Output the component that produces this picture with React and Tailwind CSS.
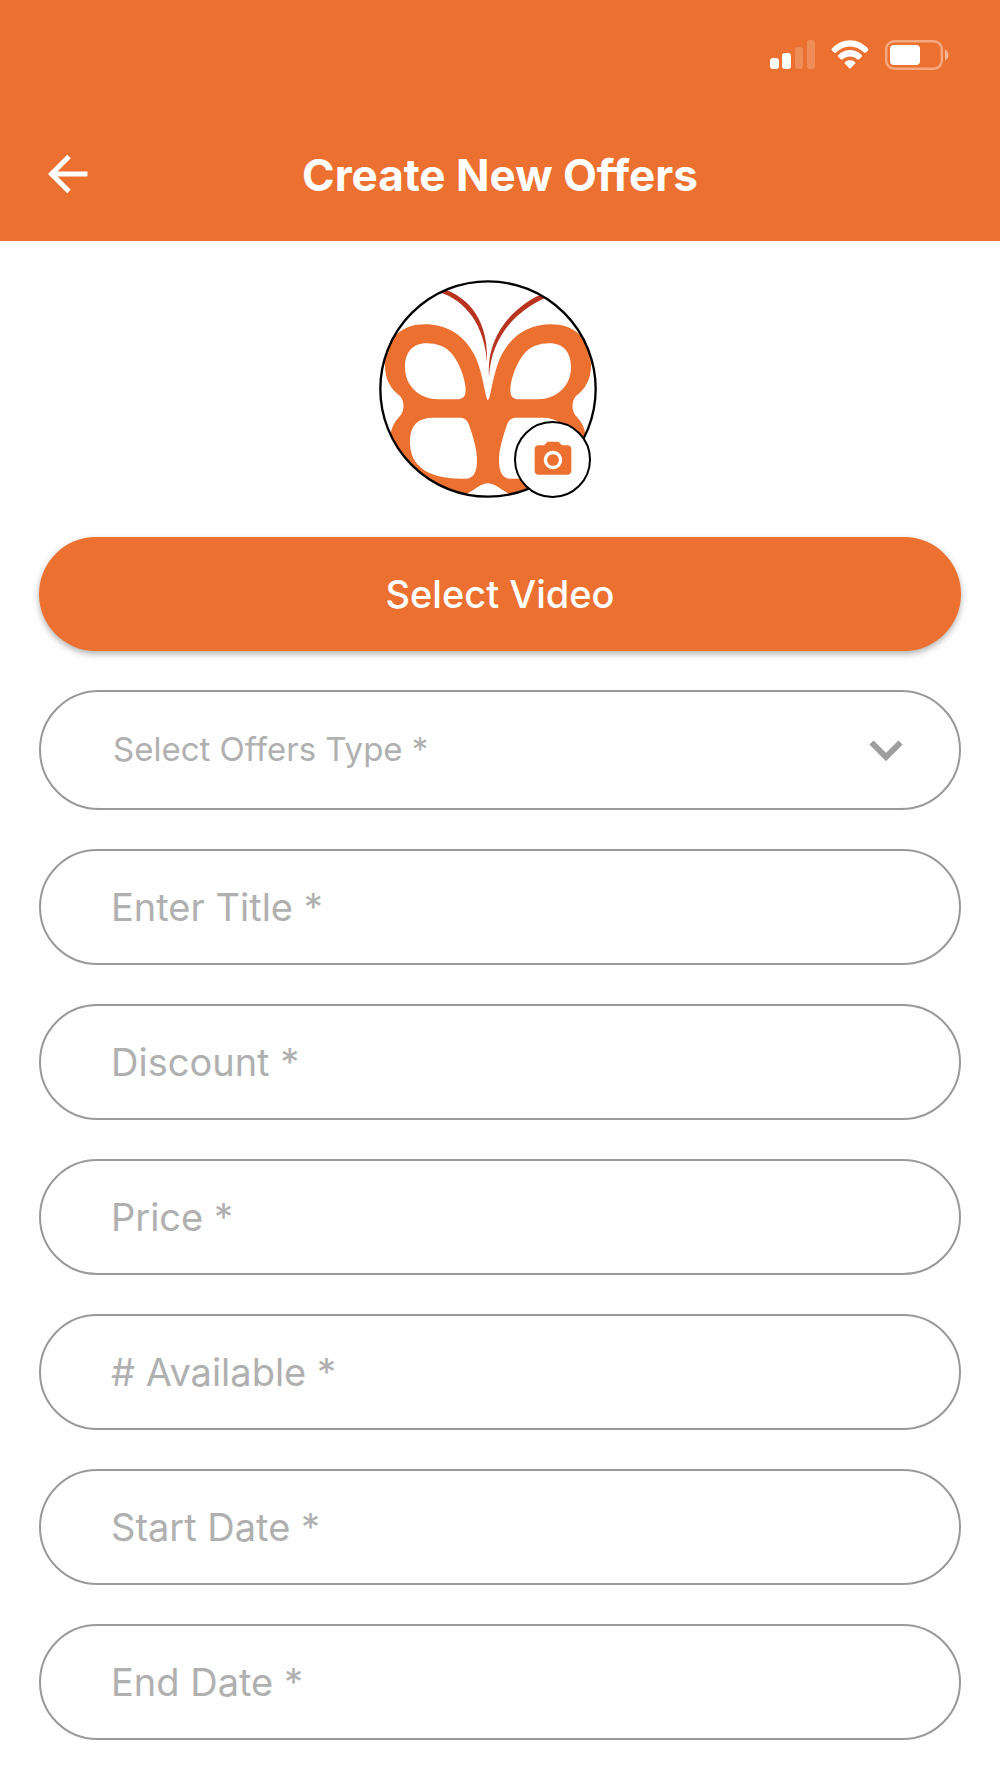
import { MdCameraAlt } from "react-icons/md";

const fields = ["Enter Title *", "Discount *", "Price *", "# Available *", "Start Date *", "End Date *"];

const wing =
    "M354 390 C345 385 340 305 312 252 C278 190 225 163 165 163 C100 163 45 200 45 285 C45 330 62 356 90 378 C104 392 104 424 90 438 C72 458 62 475 62 500 C62 600 140 690 240 685 C300 682 320 642 354 640 Z " +
    "M170 220 C125 220 105 250 105 292 C105 350 150 388 205 388 L260 388 C281 388 288 378 287 355 C284 320 268 280 248 254 C228 229 200 220 170 220 Z " +
    "M190 443 L268 443 C285 443 292 450 298 467 C311 505 321 540 321 570 C321 605 312 624 290 626 C240 626 200 622 165 602 C130 580 119 550 120 510 C121 465 145 443 190 443 Z";

function StatusBar() {
    return (
        <div className="flex h-[109px] items-center justify-end pr-[51px]">
            <svg width="45" height="30" viewBox="0 0 45 30" fill="white" aria-hidden="true">
                <rect x="0" y="18" width="9" height="11" rx="3" />
                <rect x="12" y="13" width="9" height="16" rx="3" />
                <rect x="25" y="7" width="8" height="22" rx="3" opacity="0.2" />
                <rect x="37" y="0" width="8" height="29" rx="3" opacity="0.2" />
            </svg>
            <svg className="ml-4" width="38" height="30" viewBox="0 0 38 30" fill="white" aria-hidden="true">
                <path d="M1 8.5 C11 -2.5 27 -2.5 37 8.5 Q38 9.5 37 10.5 L35 12.5 Q34 13.3 33 12.5 C25 4.5 13 4.5 5 12.5 Q4 13.3 3 12.5 L1 10.5 Q0 9.5 1 8.5 Z" />
                <path d="M7.3 15 C14 8.3 24 8.3 30.7 15 Q31.5 16 30.7 16.8 L28.2 19.2 Q27.2 20 26.2 19.2 C22 15.5 16 15.5 11.8 19.2 Q10.8 20 9.8 19.2 L7.3 16.8 Q6.5 16 7.3 15 Z" />
                <path d="M13.8 22.2 C17 19.6 21 19.6 24.2 22.2 Q24.8 22.8 24.2 23.4 L19.7 28.3 Q19 29 18.3 28.3 L13.8 23.4 Q13.2 22.8 13.8 22.2 Z" />
            </svg>
            <svg className="ml-4" width="64" height="30" viewBox="0 0 64 30" fill="white" aria-hidden="true">
                <rect x="1.2" y="1.2" width="55.6" height="27.6" rx="8" fill="none" stroke="white" strokeWidth="2.4" opacity="0.4" />
                <rect x="5" y="5" width="30" height="20" rx="4" />
                <path d="M60 9.5 C64.5 11.5 64.5 18.5 60 20.5 Z" opacity="0.5" />
            </svg>
        </div>
    );
}

function Butterfly() {
    return (
        <svg className="size-[218px]" viewBox="27 30 654 654" role="img" aria-label="Offer picture">
            <clipPath id="avatar">
                <circle cx="354" cy="357" r="323" />
            </clipPath>
            <g clipPath="url(#avatar)">
                <path d={wing} fill="#ec7130" fillRule="evenodd" />
                <path d={wing} fill="#ec7130" fillRule="evenodd" transform="translate(708 0) scale(-1 1)" />
                <path d="M205 52 C305 80 356 160 351 278 C344 170 290 90 205 66 Z" fill="#b8341f" />
                <path d="M530 66 C425 108 348 200 357 320 C363 212 425 128 530 82 Z" fill="#b8341f" />
            </g>
            <circle cx="354" cy="357" r="323" fill="none" stroke="black" strokeWidth="7" />
        </svg>
    );
}

export default function App() {
    return (
        <div className="min-h-screen bg-[#fefefe] font-['Inter',sans-serif]">
            <header className="bg-[#ec7130] text-white">
                <StatusBar />
                <div className="grid h-[132px] grid-cols-[80px_1fr_80px] items-center px-3">
                    <button type="button" aria-label="Back" className="flex h-16 items-center pl-9">
                        <svg width="40" height="40" viewBox="0 0 40 40" fill="none" stroke="white" strokeWidth="5" aria-hidden="true">
                            <path d="M21 1.5 L3.5 19 L21 36.5 M4 19 H39.5" />
                        </svg>
                    </button>
                    <h1 className="text-center text-[44px] leading-[52px] font-bold">Create New Offers</h1>
                </div>
            </header>

            <main className="px-[39px] pt-[39px] pb-[38px]">
                <div className="flex justify-center pr-6">
                    <div className="relative">
                        <Butterfly />
                        <button type="button" aria-label="Change picture"
                            className="absolute right-1.5 bottom-0 flex size-[77px] items-center justify-center rounded-full border-2 border-black bg-[#fefefe]">
                            <MdCameraAlt className="size-11 text-[#ec7130]" />
                        </button>
                    </div>
                </div>

                <form className="mt-[39px] flex flex-col gap-[39px]">
                    <button type="button" className="h-[114px] rounded-full bg-[#ec7130] text-[38px] font-medium text-white shadow-[0_3px_6px_rgba(0,0,0,0.3)]">
                        Select Video
                    </button>
                    <div className="relative">
                        <select aria-label="Select Offers Type" defaultValue=""
                            className="block h-[120px] w-full appearance-none rounded-full border-2 border-[#999999] bg-transparent px-[72px] text-[33px] text-[#b0b0b0] outline-none">
                            <option value="">Select Offers Type *</option>
                        </select>
                        <svg className="pointer-events-none absolute top-[50px] right-[58px]" width="34" height="22" viewBox="0 0 34 22" fill="none" stroke="#9e9e9e" strokeWidth="6" aria-hidden="true">
                            <path d="M2.5 2.5 L17 17 L31.5 2.5" />
                        </svg>
                    </div>
                    {fields.map((field) => (
                        <input key={field} type="text" aria-label={field} placeholder={field}
                            className="h-[116px] w-full rounded-full border-2 border-[#999999] bg-transparent px-[70px] text-[38px] text-[#333333] outline-none placeholder:text-[#b0b0b0]" />
                    ))}
                </form>
            </main>
        </div>
    );
}
